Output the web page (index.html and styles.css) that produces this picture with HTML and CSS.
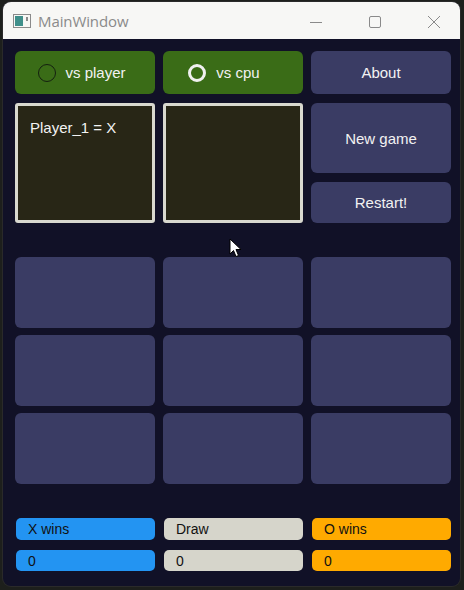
FILE: index.html
```html
<!DOCTYPE html>
<html>
<head>
<meta charset="utf-8">
<title>MainWindow</title>
<link rel="stylesheet" href="styles.css">
</head>
<body>
<div class="window">
  <div class="titlebar">
    <svg class="app-icon" width="18" height="14" viewBox="0 0 18 14">
      <rect x="0.5" y="0.5" width="17" height="13" fill="none" stroke="#8a8a8a"/>
      <rect x="2" y="2" width="8" height="10" fill="#3f8f8a"/>
      <rect x="13" y="3" width="2" height="4" fill="#8a8a8a"/>
    </svg>
    <span class="title">MainWindow</span>
    <div class="controls">
      <svg width="14" height="14" viewBox="0 0 14 14"><path d="M1 7.5H13" stroke="#8a8a8a" stroke-width="1"/></svg>
      <svg width="14" height="14" viewBox="0 0 14 14"><rect x="1.5" y="1.5" width="11" height="11" rx="1.5" fill="none" stroke="#8a8a8a"/></svg>
      <svg width="14" height="14" viewBox="0 0 14 14"><path d="M1 1L13 13M13 1L1 13" stroke="#8a8a8a" stroke-width="1"/></svg>
    </div>
  </div>
  <div class="content">
    <div class="top">
      <div class="btn green"><span class="radio"></span>vs player</div>
      <div class="btn green"><span class="radio checked"></span>vs cpu</div>
      <div class="btn navy">About</div>
      <div class="box">Player_1 = X</div>
      <div class="box"></div>
      <div class="side">
        <div class="btn navy newgame">New game</div>
        <div class="btn navy restart">Restart!</div>
      </div>
    </div>
    <div class="board">
      <div class="cell"></div><div class="cell"></div><div class="cell"></div>
      <div class="cell"></div><div class="cell"></div><div class="cell"></div>
      <div class="cell"></div><div class="cell"></div><div class="cell"></div>
    </div>
    <div class="scores">
      <div class="bar blue">X wins</div>
      <div class="bar grey">Draw</div>
      <div class="bar orange">O wins</div>
      <div class="bar blue">0</div>
      <div class="bar grey">0</div>
      <div class="bar orange">0</div>
    </div>
  </div>
</div>
<svg class="cursor" width="13" height="20" viewBox="0 0 13 20">
  <path d="M1 1V16L4.5 12.5L7 18.5L9.5 17.5L7 11.5H12Z" fill="#fff" stroke="#000" stroke-width="1"/>
</svg>
</body>
</html>
```
FILE: styles.css
```css
html, body {
  margin: 0;
  padding: 0;
}
body {
  background: #1d1f1c;
  width: 464px;
  height: 590px;
  overflow: hidden;
  position: relative;
  font-family: "Liberation Sans", Arial, sans-serif;
}
.window {
  margin: 2px 0 0 3px;
  width: 457px;
  height: 584px;
  border-radius: 8px;
  overflow: hidden;
  background: #111127;
  box-shadow: 0 0 0 1px #2a2a2a;
  display: flex;
  flex-direction: column;
}
.titlebar {
  height: 37px;
  background: #f7f7f5;
  display: flex;
  align-items: center;
  flex: none;
}
.app-icon {
  margin-left: 10px;
  margin-top: 1px;
}
.title {
  margin-left: 7px;
  font-family: "Open Sans", "Noto Sans", sans-serif;
  font-size: 15px;
  color: #8a8a8a;
  letter-spacing: -0.1px;
}
.controls {
  margin-left: auto;
  display: flex;
  gap: 45px;
  margin-right: 19px;
  margin-top: 2px;
}
.content {
  flex: 1;
  padding: 12px 9px 0 12px;
  display: flex;
  flex-direction: column;
}
.top {
  display: grid;
  grid-template-columns: 140px 140px 140px;
  grid-template-rows: 43px 120px;
  column-gap: 8px;
  row-gap: 9px;
}
.btn {
  border-radius: 6px;
  color: #f2f2f2;
  font-size: 15px;
  display: flex;
  align-items: center;
  justify-content: center;
}
.green {
  background: #3a6c17;
}
.navy {
  background: #3a3c64;
}
.radio {
  width: 16px;
  height: 16px;
  border: 1.5px solid #142010;
  border-radius: 50%;
  margin-right: 9px;
  margin-left: -6px;
}
.radio.checked {
  border: 3px solid #f0f0f0;
  width: 12px;
  height: 12px;
  margin-right: 10px;
  margin-left: -18px;
}
.box {
  border: 3px solid #d9d9cf;
  border-radius: 3px;
  background: #282616;
  color: #f2f2f2;
  font-size: 15px;
  padding: 13px 0 0 12px;
}
.side {
  display: flex;
  flex-direction: column;
  gap: 9px;
}
.newgame {
  height: 70px;
}
.restart {
  flex: 1;
}
.board {
  margin-top: 34px;
  display: grid;
  grid-template-columns: 140px 140px 140px;
  grid-template-rows: 71px 71px 71px;
  column-gap: 8px;
  row-gap: 7px;
}
.cell {
  background: #3a3c64;
  border-radius: 6px;
}
.scores {
  margin-top: 34px;
  display: grid;
  grid-template-columns: 139px 139px 139px;
  grid-template-rows: 22px 21px;
  column-gap: 9px;
  row-gap: 10px;
  padding-left: 1px;
}
.bar {
  border-radius: 5px;
  font-size: 14px;
  color: #111;
  padding-left: 12px;
  display: flex;
  align-items: center;
}
.blue {
  background: #2394f2;
}
.grey {
  background: #d6d5cb;
}
.orange {
  background: #ffaa00;
}
.cursor {
  position: absolute;
  left: 229px;
  top: 238px;
}
```
